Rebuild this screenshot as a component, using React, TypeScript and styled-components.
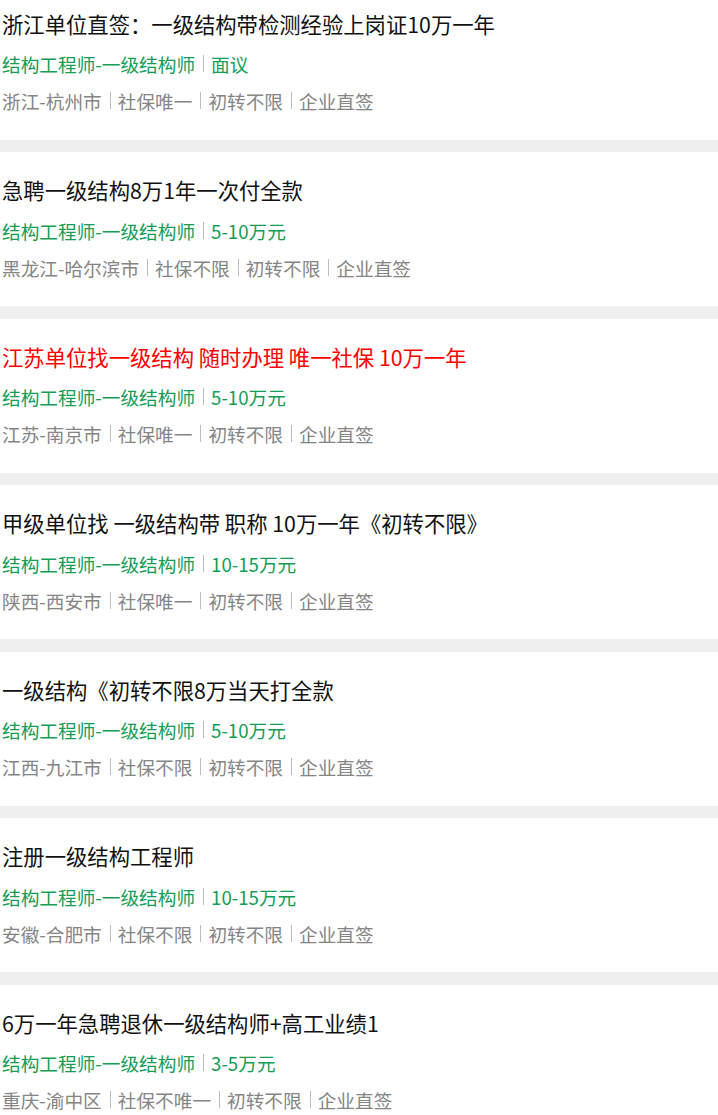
import styled, { createGlobalStyle } from 'styled-components';

const GlobalStyle = createGlobalStyle`
  html, body {
    margin: 0;
    padding: 0;
    background: #ffffff;
  }
  body {
    font-family: 'Noto Sans CJK SC', 'Noto Sans', 'Liberation Sans', sans-serif;
    overflow: hidden;
  }
`;

type Job = {
  title: string;
  hot?: boolean;
  position: string;
  salary: string;
  tags: string[];
};

const jobs: Job[] = [
  {
    title: '浙江单位直签：一级结构带检测经验上岗证10万一年',
    position: '结构工程师-一级结构师',
    salary: '面议',
    tags: ['浙江-杭州市', '社保唯一', '初转不限', '企业直签'],
  },
  {
    title: '急聘一级结构8万1年一次付全款',
    position: '结构工程师-一级结构师',
    salary: '5-10万元',
    tags: ['黑龙江-哈尔滨市', '社保不限', '初转不限', '企业直签'],
  },
  {
    title: '江苏单位找一级结构 随时办理 唯一社保 10万一年',
    hot: true,
    position: '结构工程师-一级结构师',
    salary: '5-10万元',
    tags: ['江苏-南京市', '社保唯一', '初转不限', '企业直签'],
  },
  {
    title: '甲级单位找 一级结构带 职称 10万一年《初转不限》',
    position: '结构工程师-一级结构师',
    salary: '10-15万元',
    tags: ['陕西-西安市', '社保唯一', '初转不限', '企业直签'],
  },
  {
    title: '一级结构《初转不限8万当天打全款',
    position: '结构工程师-一级结构师',
    salary: '5-10万元',
    tags: ['江西-九江市', '社保不限', '初转不限', '企业直签'],
  },
  {
    title: '注册一级结构工程师',
    position: '结构工程师-一级结构师',
    salary: '10-15万元',
    tags: ['安徽-合肥市', '社保不限', '初转不限', '企业直签'],
  },
  {
    title: '6万一年急聘退休一级结构师+高工业绩1',
    position: '结构工程师-一级结构师',
    salary: '3-5万元',
    tags: ['重庆-渝中区', '社保不唯一', '初转不限', '企业直签'],
  },
];

const App = () => {
  return (
    <>
      <GlobalStyle />
      <List>
        {jobs.map((job, i) => (
          <Item key={i}>
            <Title $hot={job.hot}>{job.title}</Title>
            <Meta $tone="green">
              <span>{job.position}</span>
              <Bar />
              <span>{job.salary}</span>
            </Meta>
            <Meta $tone="gray">
              {job.tags.map((tag, j) => (
                <Tag key={j}>
                  {j > 0 && <Bar />}
                  <span>{tag}</span>
                </Tag>
              ))}
            </Meta>
          </Item>
        ))}
      </List>
    </>
  );
};

const List = styled.div`
  display: flex;
  flex-direction: column;
  gap: 12.5px;
  margin-top: -14.5px;
  background: #efefef;
`;

const Item = styled.div`
  display: flex;
  flex-direction: column;
  height: 154px;
  box-sizing: border-box;
  padding: 18px 0 22px 2px;
  background: #ffffff;
`;

const Title = styled.div<{ $hot?: boolean }>`
  font-size: 21.33px;
  line-height: 40px;
  color: ${({ $hot }) => ($hot ? '#ff0000' : '#111111')};
  white-space: nowrap;
`;

const Meta = styled.div<{ $tone: 'green' | 'gray' }>`
  display: flex;
  align-items: center;
  font-size: 18.67px;
  height: ${({ $tone }) => ($tone === 'green' ? '40px' : '34px')};
  color: ${({ $tone }) => ($tone === 'green' ? '#139d55' : '#858585')};
  white-space: nowrap;
`;

const Tag = styled.span`
  display: inline-flex;
  align-items: center;
`;

const Bar = styled.i`
  display: inline-block;
  width: 1px;
  height: 17px;
  margin: 0 7px 0 8px;
  background: #bdbdbd;
`;

export default App;
